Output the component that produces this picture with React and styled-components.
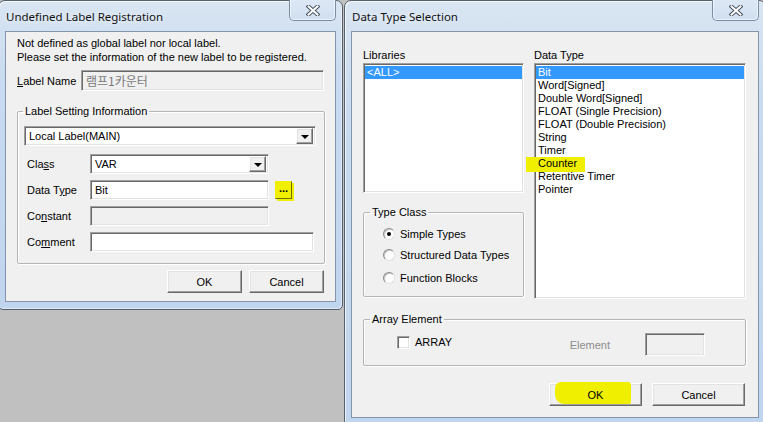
import React from 'react';
import styled, { createGlobalStyle } from 'styled-components';

const GlobalStyle = createGlobalStyle`
  html, body {
    margin: 0;
    padding: 0;
    background: #c0c0c0;
  }
  body {
    font-family: "Liberation Sans", Arial, sans-serif;
    font-size: 11px;
    color: #000;
  }
  * {
    box-sizing: border-box;
  }
`;

const Desktop = styled.div`
  width: 763px;
  height: 422px;
  overflow: hidden;
  background: #c0c0c0;
  display: flex;
  align-items: flex-start;
`;

const Window = styled.section`
  flex: none;
  width: ${({ $w }) => $w}px;
  height: ${({ $h }) => $h}px;
  margin-left: ${({ $ml }) => $ml || 0}px;
  display: flex;
  flex-direction: column;
  padding: 0 6px 7px;
  border: 1px solid #55606e;
  border-radius: 7px 7px 5px 5px;
  background: linear-gradient(180deg, #d9e5f2 0%, #c8dbf0 25%, #c0d5ee 100%);
  box-shadow: inset 1px 1px 0 rgba(255, 255, 255, 0.7),
    inset -1px -1px 0 rgba(255, 255, 255, 0.5);
`;

const TitleBar = styled.header`
  height: 30px;
  flex: none;
  display: flex;
  align-items: flex-start;
  justify-content: space-between;
`;

const Title = styled.h1`
  margin: 0;
  padding-left: 1px;
  font-family: "Noto Sans", "Open Sans", sans-serif;
  font-weight: 400;
  font-size: 11.5px;
  line-height: 31px;
  color: #111;
  text-shadow: 0 0 6px rgba(255, 255, 255, 0.9);
`;

const CloseButton = styled.button`
  margin-top: -1px;
  width: 47px;
  height: 21px;
  padding: 0;
  display: flex;
  align-items: center;
  justify-content: center;
  border: 1px solid #7b8ca3;
  border-top: none;
  border-radius: 0 0 5px 5px;
  background: linear-gradient(180deg, #dde8f5 0%, #cfdff1 100%);
  box-shadow: inset 1px 0 0 rgba(255, 255, 255, 0.6),
    inset -1px -1px 0 rgba(255, 255, 255, 0.6);
`;

const Client = styled.div`
  flex: 1;
  display: flex;
  flex-direction: column;
  border: 1px solid #8494aa;
  background: #f0f0f0;
  padding: ${({ $pad }) => $pad};
`;

const Message = styled.p`
  margin: 0;
  line-height: 14px;
`;

const Row = styled.div`
  display: flex;
  align-items: center;
  height: ${({ $h }) => $h || 20}px;
  margin-top: ${({ $mt }) => $mt || 0}px;
`;

const FieldLabel = styled.label`
  flex: none;
  width: ${({ $w }) => $w}px;
  padding-left: ${({ $pl }) => $pl || 0}px;
  color: ${({ $disabled }) => ($disabled ? '#8d8d8d' : '#000')};
`;

const sunken = `
  border: 1px solid;
  border-color: #a0a0a0 #ffffff #ffffff #a0a0a0;
  box-shadow: inset 1px 1px 0 #696969, inset -1px -1px 0 #e3e3e3;
`;

const raised = `
  border: 1px solid;
  border-color: #ffffff #696969 #696969 #ffffff;
  box-shadow: inset -1px -1px 0 #a0a0a0, inset 1px 1px 0 #e3e3e3;
`;

const TextField = styled.div`
  ${sunken}
  flex: none;
  width: ${({ $w }) => $w}px;
  height: ${({ $h }) => $h || 20}px;
  padding: 0 4px;
  display: flex;
  align-items: center;
  background: ${({ $disabled }) => ($disabled ? '#f0f0f0' : '#ffffff')};
  color: ${({ $disabled }) => ($disabled ? '#7a7a7a' : '#000')};
  font-family: ${({ $cjk }) =>
    $cjk ? '"Noto Sans CJK KR", "Liberation Sans", sans-serif' : 'inherit'};
  font-size: ${({ $cjk }) => ($cjk ? '12px' : '11px')};
`;

const Combo = styled(TextField)`
  padding: 0 2px 0 4px;
  justify-content: space-between;
`;

const DropButton = styled.span`
  ${raised}
  width: 17px;
  height: 16px;
  display: flex;
  align-items: center;
  justify-content: center;
  background: #f0f0f0;
  &::after {
    content: '';
    border-left: 4px solid transparent;
    border-right: 4px solid transparent;
    border-top: 4px solid #000;
    margin-top: 1px;
  }
`;

const EllipsisButton = styled.button`
  flex: none;
  margin-left: 6px;
  width: 17px;
  height: 18px;
  padding: 0 0 4px;
  border: 1px solid;
  border-color: #f0ef00 #6f6f00 #6f6f00 #f0ef00;
  background: #f0ef00;
  box-shadow: 2px 2px 0 #f0ef00;
  font-family: "Liberation Sans", Arial, sans-serif;
  font-size: 11px;
  font-weight: 700;
  line-height: 10px;
  color: #000;
`;

const GroupBox = styled.fieldset`
  margin: ${({ $mt }) => $mt || 0}px 0 0;
  padding: ${({ $pad }) => $pad};
  min-inline-size: 0;
  border: 1px solid #b5b5b5;
  border-radius: 2px;
  box-shadow: inset 1px 1px 0 #fff, 1px 1px 0 #fff;
`;

const Legend = styled.legend`
  margin-left: ${({ $ml }) => $ml}px;
  padding: 0 2px;
  line-height: 14px;
  font-size: 11px;
`;

const ButtonRow = styled.div`
  display: flex;
  justify-content: flex-end;
  gap: ${({ $gap }) => $gap}px;
  margin-top: ${({ $mt }) => $mt}px;
  margin-right: ${({ $mr }) => $mr || 0}px;
`;

const PushButton = styled.button`
  ${raised}
  position: relative;
  width: ${({ $w }) => $w}px;
  height: 23px;
  padding: 0;
  background: #f0f0f0;
  font-family: "Liberation Sans", Arial, sans-serif;
  font-size: 11px;
  color: #000;
`;

const ButtonText = styled.span`
  position: relative;
`;

const Marker = styled.span`
  position: absolute;
  left: ${({ $l }) => $l}px;
  top: ${({ $t }) => $t}px;
  width: ${({ $w }) => $w}px;
  height: ${({ $h }) => $h}px;
  background: #f0ef00;
  border-radius: ${({ $r }) => $r || '0'};
`;

const Columns = styled.div`
  display: grid;
  grid-template-columns: 161px 212px;
  column-gap: 10px;
  align-items: start;
`;

const Column = styled.div`
  display: flex;
  flex-direction: column;
`;

const ListTitle = styled.div`
  line-height: 14px;
  margin-bottom: 1px;
`;

const ListBox = styled.ul`
  ${sunken}
  position: relative;
  margin: 0;
  padding: 2px 1px;
  list-style: none;
  height: ${({ $h }) => $h}px;
  background: #fff;
`;

const ListItem = styled.li`
  position: relative;
  height: 13px;
  line-height: 13px;
  padding-left: 2px;
  background: ${({ $selected }) => ($selected ? '#3399ff' : 'transparent')};
  color: ${({ $selected }) => ($selected ? '#fff' : '#000')};
  white-space: nowrap;
`;

const ItemText = styled.span`
  position: relative;
`;

const RadioRow = styled.label`
  display: flex;
  align-items: center;
  gap: 5px;
  height: ${({ $h }) => $h}px;
`;

const RadioDot = styled.span`
  width: 12px;
  height: 12px;
  border-radius: 50%;
  background: #fff;
  border: 1px solid;
  border-color: #8a8a8a #e0e0e0 #e0e0e0 #8a8a8a;
  box-shadow: inset 1px 1px 0 #c8c8c8;
  display: flex;
  align-items: center;
  justify-content: center;
  &::after {
    content: '';
    width: 4px;
    height: 4px;
    border-radius: 50%;
    background: ${({ $checked }) => ($checked ? '#000' : 'transparent')};
  }
`;

const ArrayRow = styled.div`
  display: flex;
  align-items: flex-start;
  height: 23px;
`;

const CheckBox = styled.span`
  ${sunken}
  flex: none;
  margin-top: 3px;
  width: 13px;
  height: 13px;
  background: #fff;
`;

const CheckLabel = styled.span`
  margin-left: 5px;
  margin-top: 3px;
  line-height: 13px;
`;

const ElementLabel = styled.span`
  margin-left: auto;
  margin-right: 35px;
  margin-top: 6px;
  line-height: 13px;
  color: #8d8d8d;
`;

function CloseGlyph() {
  return (
    <svg width="14" height="11" viewBox="0 0 14 11" aria-hidden="true">
      <path d="M2.5 1.5 L11.5 9.5 M11.5 1.5 L2.5 9.5" stroke="#4b5563" strokeWidth="4" strokeLinecap="square" fill="none" />
      <path d="M2.5 1.5 L11.5 9.5 M11.5 1.5 L2.5 9.5" stroke="#ffffff" strokeWidth="2" strokeLinecap="square" fill="none" />
    </svg>
  );
}

const dataTypes = [
  'Bit',
  'Word[Signed]',
  'Double Word[Signed]',
  'FLOAT (Single Precision)',
  'FLOAT (Double Precision)',
  'String',
  'Timer',
  'Counter',
  'Retentive Timer',
  'Pointer',
];

function LabelRegistration() {
  return (
    <Window $w={345} $h={310} $ml={-2}>
      <TitleBar>
        <Title>Undefined Label Registration</Title>
        <CloseButton aria-label="Close">
          <CloseGlyph />
        </CloseButton>
      </TitleBar>
      <Client $pad="4px 10px 8px 11px">
        <Message>
          Not defined as global label nor local label.
          <br />
          Please set the information of the new label to be registered.
        </Message>
        <Row $h={21} $mt={6}>
          <FieldLabel $w={64}>
            <u>L</u>abel Name
          </FieldLabel>
          <TextField $w={243} $h={21} $disabled $cjk>
            램프1카운터
          </TextField>
        </Row>
        <GroupBox $mt={13} $pad="8px 7px 11px 6px">
          <Legend $ml={-1}>Label Setting Information</Legend>
          <Combo $w={292}>
            Local Label(MAIN)
            <DropButton />
          </Combo>
          <Row $mt={8}>
            <FieldLabel $w={66} $pl={3}>
              Cla<u>s</u>s
            </FieldLabel>
            <Combo $w={179}>
              VAR
              <DropButton />
            </Combo>
          </Row>
          <Row $mt={6}>
            <FieldLabel $w={66} $pl={3}>
              Data T<u>y</u>pe
            </FieldLabel>
            <TextField $w={179}>Bit</TextField>
            <EllipsisButton>...</EllipsisButton>
          </Row>
          <Row $mt={6}>
            <FieldLabel $w={66} $pl={3}>
              Co<u>n</u>stant
            </FieldLabel>
            <TextField $w={179} $disabled />
          </Row>
          <Row $mt={6}>
            <FieldLabel $w={66} $pl={3}>
              Co<u>m</u>ment
            </FieldLabel>
            <TextField $w={224} />
          </Row>
        </GroupBox>
        <ButtonRow $gap={7} $mt={6} $mr={1}>
          <PushButton $w={75}>OK</PushButton>
          <PushButton $w={75}>Cancel</PushButton>
        </ButtonRow>
      </Client>
    </Window>
  );
}

function DataTypeSelection() {
  return (
    <Window $w={422} $h={426} $ml={1}>
      <TitleBar>
        <Title>Data Type Selection</Title>
        <CloseButton aria-label="Close">
          <CloseGlyph />
        </CloseButton>
      </TitleBar>
      <Client $pad="16px 12px 11px 11px">
        <Columns>
          <Column>
            <ListTitle>Libraries</ListTitle>
            <ListBox $h={130}>
              <ListItem $selected>&lt;ALL&gt;</ListItem>
            </ListBox>
            <GroupBox $mt={12} $pad="4px 6px 7px 19px">
              <Legend $ml={-13}>Type Class</Legend>
              <RadioRow $h={21}>
                <RadioDot $checked />
                Simple Types
              </RadioRow>
              <RadioRow $h={22}>
                <RadioDot />
                Structured Data Types
              </RadioRow>
              <RadioRow $h={23}>
                <RadioDot />
                Function Blocks
              </RadioRow>
            </GroupBox>
          </Column>
          <Column>
            <ListTitle>Data Type</ListTitle>
            <ListBox $h={236}>
              {dataTypes.map((t, i) => (
                <ListItem key={t} $selected={i === 0}>
                  {t === 'Counter' && <Marker $l={-10} $t={0} $w={59} $h={15} />}
                  <ItemText>{t}</ItemText>
                </ListItem>
              ))}
            </ListBox>
          </Column>
        </Columns>
        <GroupBox $mt={13} $pad="7px 40px 9px 33px">
          <Legend $ml={-27}>Array Element</Legend>
          <ArrayRow>
            <CheckBox />
            <CheckLabel>ARRAY</CheckLabel>
            <ElementLabel>Element</ElementLabel>
            <TextField $w={60} $h={23} $disabled />
          </ArrayRow>
        </GroupBox>
        <ButtonRow $gap={10} $mt={17} $mr={1}>
          <PushButton $w={93}>
            <Marker $l={5} $t={-2} $w={76} $h={22} $r="6px 3px 2px 9px" />
            <ButtonText>OK</ButtonText>
          </PushButton>
          <PushButton $w={93}>Cancel</PushButton>
        </ButtonRow>
      </Client>
    </Window>
  );
}

export default function App() {
  return (
    <>
      <GlobalStyle />
      <Desktop>
        <LabelRegistration />
        <DataTypeSelection />
      </Desktop>
    </>
  );
}
